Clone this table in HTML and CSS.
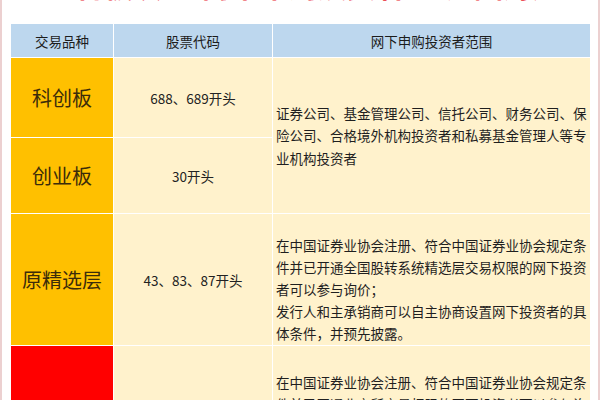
FILE: index.html
```html
<!DOCTYPE html>
<html lang="zh-CN">
<head>
<meta charset="utf-8">
<title>网下申购投资者范围</title>
<link rel="stylesheet" href="styles.css">
</head>
<body>
<div class="page">
  <div class="title">
    <div class="title-text">
      <span class="t1">各板块</span>
      <span class="t2">网下申购投资者</span>
      <span class="t3">范围对比</span>
    </div>
  </div>
  <div class="table">
    <div class="cell head">交易品种</div>
    <div class="cell head">股票代码</div>
    <div class="cell head">网下申购投资者范围</div>

    <div class="cell label yellow">科创板</div>
    <div class="cell code">688、689开头</div>
    <div class="cell desc merged">证券公司、基金管理公司、信托公司、财务公司、保<br>险公司、合格境外机构投资者和私募基金管理人等专<br>业机构投资者</div>

    <div class="cell label yellow">创业板</div>
    <div class="cell code">30开头</div>

    <div class="cell label yellow">原精选层</div>
    <div class="cell code">43、83、87开头</div>
    <div class="cell desc top r3">在中国证券业协会注册、符合中国证券业协会规定条<br>件并已开通全国股转系统精选层交易权限的网下投资<br>者可以参与询价；<br>发行人和主承销商可以自主协商设置网下投资者的具<br>体条件，并预先披露。</div>

    <div class="cell label red">北交所</div>
    <div class="cell code">8开头</div>
    <div class="cell desc top r4">在中国证券业协会注册、符合中国证券业协会规定条<br>件并已开通北交所交易权限的网下投资者可以参与询<br>价；发行人和主承销商可以自主协商设置网下投资者<br>的具体条件，并预先披露。</div>
  </div>
</div>
</body>
</html>
```
FILE: styles.css
```css
* { box-sizing: border-box; }
html, body { margin: 0; padding: 0; background: #fff; }
.page {
  width: 600px;
  height: 400px;
  overflow: hidden;
  border-left: 2px solid #ecd0d0;
  border-right: 2px solid #ecd0d0;
  background: #fff;
  font-family: "Noto Sans CJK SC", "Noto Sans", sans-serif;
}
.title {
  height: 24px;
  overflow: hidden;
}
.title-text {
  margin-top: -30px;
  height: 30px;
  line-height: 30px;
  font-size: 29px;
  font-weight: 700;
  color: #e8262f;
  display: flex;
  padding-left: 73px;
  gap: 40px;
  white-space: nowrap;
}
.table {
  margin-left: 9px;
  width: 579px;
  display: grid;
  grid-template-columns: 102px 158px 317px;
  grid-template-rows: 33px 79px 75px 131px 130px;
  gap: 1px;
  background: #fff;
}
.cell {
  display: flex;
  align-items: center;
  justify-content: center;
  background: #fff2cc;
  color: #222;
  font-size: 13.5px;
}
.head {
  background: #bdd7ee;
  color: #1c1c1c;
  font-size: 13.5px;
}
.label {
  font-size: 20px;
  color: #3b2c0a;
}
.yellow { background: #ffc000; }
.red { background: #ff0000; }
.code { color: #222; }
.desc {
  justify-content: flex-start;
  text-align: left;
  line-height: 22.5px;
  padding: 0 2px 0 3px;
  white-space: nowrap;
  color: #1f1f1f;
}
.merged { grid-row: span 2; }
.top { align-items: flex-start; line-height: 22px; }
.r3 { padding-top: 20px; }
.r4 { padding-top: 25px; }
```
